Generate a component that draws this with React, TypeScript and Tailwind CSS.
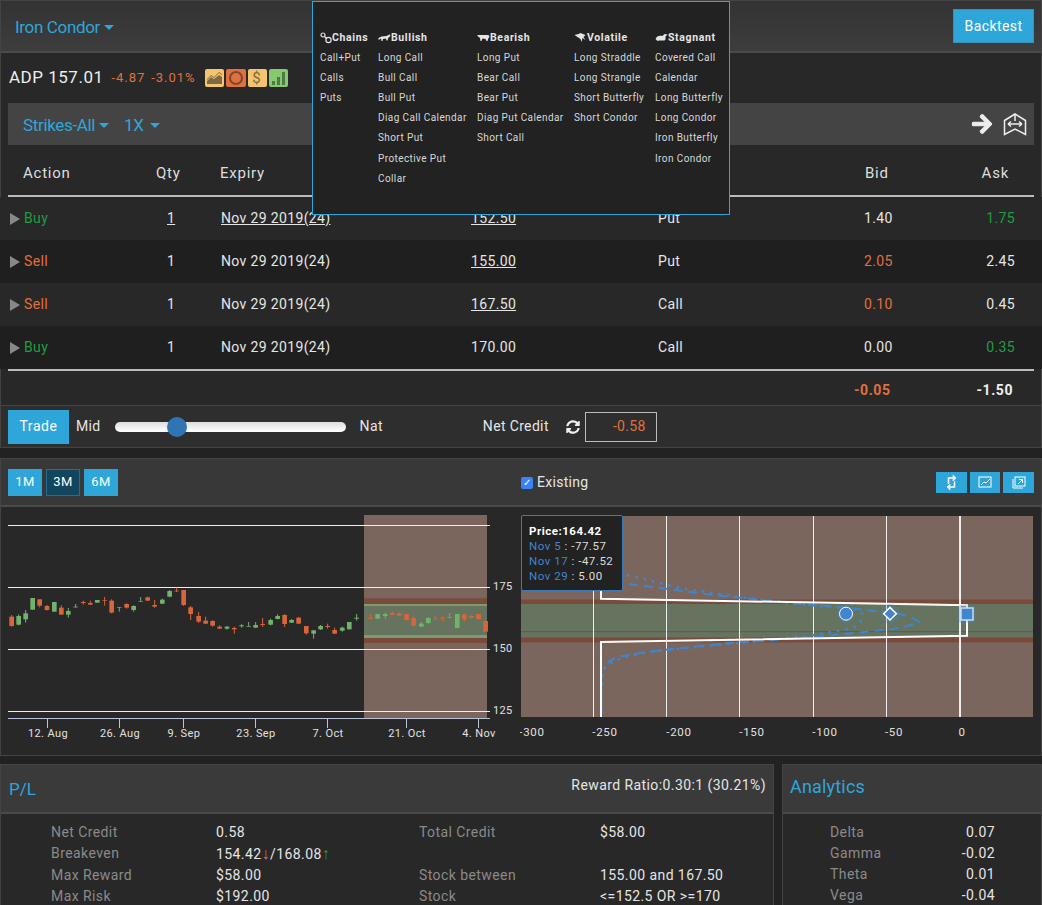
import { FaArrowRight, FaRetweet, FaSyncAlt } from 'react-icons/fa'

const candles: [number, number, number, number, number, 'r' | 'g'][] = [
  [35, 350, 378, 345, 380, 'r'], [56, 348, 374, 343, 376, 'g'], [77, 340, 358, 330, 368, 'g'],
  [98, 294, 329, 294, 329, 'g'], [119, 298, 317, 298, 322, 'r'], [141, 318, 330, 315, 332, 'r'],
  [163, 306, 335, 306, 335, 'g'], [184, 323, 344, 316, 344, 'r'], [205, 333, 344, 324, 353, 'g'],
  [227, 320, 322, 312, 323, 'g'], [250, 306, 309, 302, 314, 'r'], [271, 309, 314, 302, 315, 'r'],
  [292, 300, 308, 300, 308, 'g'], [314, 300, 302, 291, 317, 'r'], [335, 302, 338, 298, 340, 'r'],
  [358, 321, 323, 321, 335, 'g'], [380, 312, 323, 310, 326, 'r'], [401, 318, 330, 316, 335, 'g'],
  [422, 303, 305, 291, 305, 'g'], [443, 292, 302, 290, 303, 'r'], [464, 315, 320, 300, 323, 'r'],
  [487, 299, 311, 296, 312, 'g'], [509, 273, 290, 270, 292, 'g'], [530, 272, 274, 263, 276, 'r'],
  [551, 270, 315, 270, 318, 'r'], [572, 322, 342, 318, 360, 'r'], [596, 348, 365, 336, 369, 'r'],
  [617, 362, 371, 350, 372, 'r'], [638, 363, 377, 361, 380, 'r'], [659, 380, 386, 376, 387, 'r'],
  [681, 380, 386, 378, 389, 'g'], [703, 384, 388, 380, 401, 'r'], [725, 376, 379, 372, 383, 'g'],
  [746, 378, 380, 366, 380, 'g'], [767, 375, 383, 366, 384, 'g'], [788, 372, 375, 354, 381, 'r'],
  [812, 360, 374, 356, 376, 'g'], [833, 348, 357, 343, 358, 'g'], [854, 345, 372, 343, 381, 'r'],
  [875, 360, 368, 357, 369, 'g'], [896, 353, 371, 351, 372, 'r'], [919, 378, 400, 378, 404, 'r'],
  [941, 391, 401, 391, 416, 'g'], [962, 378, 388, 375, 390, 'g'], [983, 378, 381, 371, 386, 'r'],
  [1004, 390, 401, 383, 401, 'r'], [1027, 383, 392, 380, 395, 'g'], [1048, 366, 388, 366, 388, 'g'],
  [1070, 353, 356, 342, 362, 'g'], [1112, 353, 356, 343, 357, 'r'], [1133, 342, 356, 342, 356, 'g'],
  [1156, 342, 348, 338, 356, 'g'], [1177, 339, 344, 333, 345, 'r'], [1198, 340, 347, 338, 349, 'r'],
  [1220, 342, 360, 342, 361, 'r'], [1241, 354, 377, 349, 377, 'r'], [1264, 371, 380, 366, 381, 'g'],
  [1285, 354, 369, 351, 371, 'g'], [1306, 356, 358, 346, 360, 'r'], [1328, 353, 356, 349, 365, 'r'],
  [1349, 351, 353, 339, 353, 'g'], [1372, 342, 384, 342, 384, 'g'], [1393, 344, 358, 340, 365, 'r'],
  [1415, 348, 353, 345, 355, 'r'], [1436, 342, 358, 342, 358, 'r'], [1457, 363, 395, 363, 395, 'r'],
]

const menu = [
  { title: 'Chains', icon: 'chain', width: 'w-[58px]', items: ['Call+Put', 'Calls', 'Puts'] },
  { title: 'Bullish', icon: 'bull', width: 'w-[99px]', items: ['Long Call', 'Bull Call', 'Bull Put', 'Diag Call Calendar', 'Short Put', 'Protective Put', 'Collar'] },
  { title: 'Bearish', icon: 'bear', width: 'w-[97px]', items: ['Long Put', 'Bear Call', 'Bear Put', 'Diag Put Calendar', 'Short Call'] },
  { title: 'Volatile', icon: 'bird', width: 'w-[81px]', items: ['Long Straddle', 'Long Strangle', 'Short Butterfly', 'Short Condor'] },
  { title: 'Stagnant', icon: 'turtle', width: 'w-[72px]', items: ['Covered Call', 'Calendar', 'Long Butterfly', 'Long Condor', 'Iron Butterfly', 'Iron Condor'] },
]

const legs = [
  { action: 'Buy', qty: '1', qtyLine: true, strike: '152.50', strikeLine: true, type: 'Put', bid: '1.40', bidColor: 'text-[#e5e5e5]', ask: '1.75', askColor: 'text-[#1f9d45]', dateLine: true },
  { action: 'Sell', qty: '1', qtyLine: false, strike: '155.00', strikeLine: true, type: 'Put', bid: '2.05', bidColor: 'text-[#e0703f]', ask: '2.45', askColor: 'text-[#e5e5e5]', dateLine: false },
  { action: 'Sell', qty: '1', qtyLine: false, strike: '167.50', strikeLine: true, type: 'Call', bid: '0.10', bidColor: 'text-[#e0703f]', ask: '0.45', askColor: 'text-[#e5e5e5]', dateLine: false },
  { action: 'Buy', qty: '1', qtyLine: false, strike: '170.00', strikeLine: false, type: 'Call', bid: '0.00', bidColor: 'text-[#e5e5e5]', ask: '0.35', askColor: 'text-[#1f9d45]', dateLine: false },
]

function Caret() {
  return <span className="ml-[4px] inline-block border-x-[5.5px] border-t-[5.5px] border-x-transparent border-t-[#2ea6da] align-[3px]" />
}

function MenuIcon({ name }: { name: string }) {
  if (name === 'chain') {
    return (
      <svg width="12" height="12" viewBox="0 0 12 12" fill="none" stroke="#e5e5e5" strokeWidth="1.2" className="shrink-0">
        <circle cx="3" cy="3" r="2" />
        <circle cx="8.500" cy="8" r="2.600" />
        <path d="M4.500 4.500l2 2" />
      </svg>
    )
  }
  const paths: Record<string, string> = {
    bull: 'M0 5l3-1.500 5-.5 3-1.500 1 .5-1 2-1 .5-1 3H8l-.5-2-3 .5-.5 2H3L2.500 5.500 0 7z',
    bear: 'M0 2h11l1 2-1 1-1 3H9L8 6 5 5.500 4 8H3L2.500 5 0 3z',
    bird: 'M0 2l4-1 2-1 5 2-2 2 2 3-3-2-1 4-1-3-3-2z',
    turtle: 'M0 6c1-3 4-4 7-3l2-2 3 .5-2 2v3l-1 1H3.500L2 8z',
  }
  return (
    <svg width="13" height="10" viewBox="0 0 12 10" fill="#e5e5e5" className="shrink-0">
      <path d={paths[name]} />
    </svg>
  )
}

function Dropdown() {
  return (
    <div className="absolute top-px left-[312px] z-10 flex h-[214px] w-[418px] border border-[#2ea6da] bg-[#222] pt-[27px] pl-[7px] text-[10px] tracking-[0.04em] text-[#d8d8d8]">
      {menu.map((col) => (
        <div key={col.title} className={col.width}>
          <div className="flex h-[18px] items-center text-[10.5px] font-bold tracking-[0.06em] text-[#e5e5e5]">
            <MenuIcon name={col.icon} />
            {col.title}
          </div>
          {col.items.map((item) => (
            <div key={item} className="flex h-[20.2px] items-center whitespace-nowrap">
              {item}
            </div>
          ))}
        </div>
      ))}
    </div>
  )
}

function Gauges() {
  return (
    <div className="ml-[9px] flex gap-[2px]">
      <span className="flex h-[18px] w-[19px] items-center justify-center rounded-[2px] bg-[#f6c36f]">
        <svg width="15" height="13" viewBox="0 0 15 13" fill="#7d6a44">
          <path d="M0 7l4-4 3 2 5-5 3 2v1l-3-2-5 5-3-2-4 4z" />
          <path d="M0 12V9l4-4 3 2 5-4 3 2v7z" />
        </svg>
      </span>
      <span className="flex h-[18px] w-[20px] items-center justify-center rounded-[2px] bg-[#e0703f]">
        <span className="h-[14px] w-[14px] rounded-full border-2 border-[#7a4a30]" />
      </span>
      <span className="flex h-[18px] w-[19px] items-center justify-center rounded-[2px] bg-[#f6c36f] text-[15px] text-[#7d6a44]">$</span>
      <span className="flex h-[18px] w-[19px] items-end justify-center gap-[2px] rounded-[2px] bg-[#86c96e] pb-[2px]">
        <span className="h-[4px] w-[3px] bg-[#4f7a45]" />
        <span className="h-[8px] w-[3px] bg-[#4f7a45]" />
        <span className="h-[13px] w-[3px] bg-[#4f7a45]" />
      </span>
    </div>
  )
}

function TradePanel() {
  return (
    <section className="border border-[#444] bg-[#282828]">
      <div className="flex h-[52px] items-center justify-between border-b-2 border-[#4a4a4a] bg-gradient-to-b from-[#333] to-[#3d3d3d] pr-[7px] pl-[14px]">
        <span className="pt-[3px] text-[17px] tracking-[-0.02em] text-[#2ea6da]">
          Iron Condor
          <Caret />
        </span>
        <button className="h-[34px] w-[81px] border border-[#3a8fb5] bg-[#2ea6da] text-[14px] tracking-[0.03em] text-white">Backtest</button>
      </div>
      <div className="flex h-[50px] items-center pl-[8px] tracking-[0.06em]">
        <span className="text-[17px] tracking-[0.03em] text-[#eee]">ADP 157.01</span>
        <span className="ml-[8px] text-[13px] text-[#e0703f]">-4.87</span>
        <span className="ml-[6px] text-[13px] text-[#e0703f]">-3.01%</span>
        <Gauges />
      </div>
      <div className="mx-[7px] flex h-[42px] items-center justify-between bg-[#444] pr-[7px] pl-[15px]">
        <div className="pt-[3px] text-[17px] tracking-[-0.02em] text-[#2ea6da]">
          Strikes-All
          <Caret />
          <span className="ml-[15px]">1X</span>
          <span className="ml-[2px]"><Caret /></span>
        </div>
        <div className="flex items-center gap-[10px] text-[#eee]">
          <FaArrowRight className="h-[22px] w-[22px] stroke-current stroke-[25]" />
          <svg width="24" height="24" viewBox="0 0 24 24" fill="none" stroke="#eee" strokeWidth="1.5">
            <path d="M1.500 8.500L12 2l10.500 6.500v14L12 17 1.500 22.500z" />
            <path d="M12 2v7M5 12h14M5 12l3-2.500M5 12l3 2.500M19 12l-3-2.500M19 12l-3 2.500" />
          </svg>
        </div>
      </div>
      <div className="mx-[7px] grid h-[52px] grid-cols-[130px_63px_250px_188px_208px_118px_69px] items-center border-b-2 border-[#bbb] pt-[6px] text-[15px] tracking-[0.05em] text-[#ddd]">
        <span className="pl-[15px]">Action</span>
        <span className="pl-[18px]">Qty</span>
        <span className="pl-[19px]">Expiry</span>
        <span />
        <span />
        <span className="pl-[18px]">Bid</span>
        <span className="pr-[25px] text-right">Ask</span>
      </div>
      {legs.map((leg, i) => (
        <div
          key={leg.strike}
          className={`mx-[-1px] grid h-[43px] grid-cols-[138px_63px_250px_187px_209px_117px_77px] items-center text-[14px] tracking-[0.025em] text-[#e5e5e5] ${i % 2 === 0 ? 'bg-[#282828]' : 'bg-[#1f1f1f]'}`}
        >
          <span className={`flex items-center pl-[10px] ${leg.action === 'Buy' ? 'text-[#1f9d45]' : 'text-[#e0703f]'}`}>
            <span className="mr-[4px] inline-block border-y-[6px] border-l-[10px] border-y-transparent border-l-[#888]" />
            {leg.action}
          </span>
          <span className="pl-[29px]"><span className={leg.qtyLine ? 'underline' : ''}>{leg.qty}</span></span>
          <span className="pl-[20px]"><span className={leg.dateLine ? 'underline' : ''}>Nov 29 2019(24)</span></span>
          <span className="pl-[20px]"><span className={leg.strikeLine ? 'underline' : ''}>{leg.strike}</span></span>
          <span className="pl-[20px]">{leg.type}</span>
          <span className={`pl-[17px] ${leg.bidColor}`}>{leg.bid}</span>
          <span className={`pr-[26px] text-right ${leg.askColor}`}>{leg.ask}</span>
        </div>
      ))}
      <div className="mx-[7px] flex h-[36px] items-center justify-end border-t-2 border-[#bbb] pt-[4px] pr-[21px] text-[14px] font-bold tracking-[0.04em]">
        <span className="text-[#e0703f]">-0.05</span>
        <span className="ml-[86px] text-[#eee]">-1.50</span>
      </div>
    </section>
  )
}

function TradeBar() {
  return (
    <div className="flex h-[42px] items-center border border-t-0 border-[#444] bg-[#2e2e2e] pl-[7px] text-[14px] tracking-[0.025em] text-[#e5e5e5]">
      <button className="h-[34px] w-[61px] bg-[#2ea6da] tracking-[0.04em] text-white">Trade</button>
      <span className="ml-[7px]">Mid</span>
      <div className="relative ml-[14px] h-[10px] w-[231px] rounded-full bg-gradient-to-b from-[#ddd] to-white">
        <span className="absolute top-[-5px] left-[52px] h-[20px] w-[20px] rounded-full bg-[#2f74b5]" />
      </div>
      <span className="ml-[14px]">Nat</span>
      <span className="ml-[100px]">Net Credit</span>
      <FaSyncAlt className="ml-[17px] h-[14px] w-[14px] text-[#eee]" />
      <div className="ml-[5px] flex h-[30px] w-[72px] items-center justify-end border border-[#bbb] pr-[10px] text-[#e0703f]">-0.58</div>
    </div>
  )
}

function CandleChart() {
  return (
    <svg width="519" height="248" viewBox="1 507 519 248" className="block shrink-0" fontFamily="Roboto, sans-serif">
      <rect x="364" y="515" width="123" height="203" fill="#7a665c" />
      <rect x="364" y="598.300" width="123" height="6" fill="#7a4a3c" />
      <rect x="364" y="604" width="123" height="2" fill="#7f9a70" />
      <rect x="364" y="606" width="123" height="29" fill="#66735f" />
      <rect x="364" y="635" width="123" height="3" fill="#7f9a70" />
      <rect x="364" y="638" width="123" height="5" fill="#7a4a3c" />
      {[525.5, 587.5, 649.5, 711.5].map((y) => (
        <line key={y} x1="8" x2="490" y1={y} y2={y} stroke="#eee" strokeWidth="1" />
      ))}
      <line x1="8" x2="490" y1="718.500" y2="718.500" stroke="#b8c4dc" strokeWidth="1" />
      {[47.5, 119.5, 183.5, 255.5, 327.5, 406.5, 478.5].map((x) => (
        <line key={x} x1={x} x2={x} y1="718" y2="728" stroke="#b8c4dc" strokeWidth="1" />
      ))}
      <g transform="translate(0 500) scale(0.3333)">
        {candles.map(([x, top, bottom, high, low, color]) => (
          <g key={x} fill={color === 'r' ? '#d9653a' : '#71b36b'} stroke={color === 'r' ? '#d9653a' : '#71b36b'}>
            <line x1={x} x2={x} y1={high} y2={low} strokeWidth="3" />
            <rect x={x - 7} y={top} width="14" height={bottom - top} strokeWidth="0" />
          </g>
        ))}
      </g>
      <g fill="#e0e0e0" fontSize="11" letterSpacing="0.3">
        <text x="493" y="590">175</text>
        <text x="493" y="652">150</text>
        <text x="493" y="714">125</text>
      </g>
      <g fill="#e0e0e0" fontSize="11" letterSpacing="0.4" textAnchor="middle">
        <text x="48" y="737">12. Aug</text>
        <text x="120" y="737">26. Aug</text>
        <text x="184" y="737">9. Sep</text>
        <text x="256" y="737">23. Sep</text>
        <text x="328" y="737">7. Oct</text>
        <text x="407" y="737">21. Oct</text>
        <text x="479" y="737">4. Nov</text>
      </g>
    </svg>
  )
}

function PayoffChart() {
  return (
    <div className="relative shrink-0">
      <svg width="521" height="248" viewBox="520 507 521 248" className="block" fontFamily="Roboto, sans-serif">
        <rect x="521" y="516" width="512" height="201" fill="#7a665c" />
        <rect x="521" y="599.500" width="512" height="5" fill="#7a4a3c" />
        <rect x="521" y="604" width="512" height="33.500" fill="#66735f" />
        <rect x="521" y="637.500" width="512" height="5" fill="#7a4a3c" />
        <line x1="521" x2="1033" y1="631.700" y2="631.700" stroke="#4f5f4f" />
        {[593.5, 666.5, 739.5, 813.5, 886.5].map((x) => (
          <line key={x} x1={x} x2={x} y1="516" y2="717" stroke="#eee" strokeWidth="1" />
        ))}
        <line x1="960" x2="960" y1="516" y2="717" stroke="#eee" strokeWidth="2" />
        <path
          d="M627 575L680 588L747 598L815 606L849 608Q865 612 863 617Q860 625 853 628L815 635L747 642L666 650Q640 653 622 658Q608 663 603 670Q601 690 601.500 717"
          fill="none" stroke="#3f86cf" strokeWidth="2.500" strokeDasharray="2.500 6"
        />
        <path
          d="M629 584L714 595L781 602L849 608L900 614Q915 618 919 622Q905 628 883 630L815 637L731 643L663 650Q635 653 619 657Q612 659 607 663"
          fill="none" stroke="#3f86cf" strokeWidth="2" strokeDasharray="9 6"
        />
        <path d="M601 590V598.700L967 605.300V635.700L601 642V717" fill="none" stroke="#fff" strokeWidth="2" />
        <circle cx="846" cy="613.700" r="9.500" fill="#3f86cf" opacity="0.25" />
        <circle cx="846" cy="613.700" r="6.500" fill="#3f86cf" stroke="#fff" strokeWidth="1" />
        <circle cx="890" cy="613.700" r="10" fill="#3f86cf" opacity="0.25" />
        <rect x="885.500" y="609.200" width="9" height="9" fill="#3f86cf" stroke="#fff" strokeWidth="1.500" transform="rotate(45 890 613.700)" />
        <rect x="958" y="605" width="18" height="18" rx="3" fill="#3f86cf" opacity="0.25" />
        <rect x="961" y="608" width="12" height="12" fill="#3f86cf" stroke="#cde" strokeWidth="1.500" />
        <g fill="#e0e0e0" fontSize="11.500" letterSpacing="0.7" textAnchor="middle">
          <text x="532" y="736">-300</text>
          <text x="605" y="736">-250</text>
          <text x="679" y="736">-200</text>
          <text x="752" y="736">-150</text>
          <text x="825" y="736">-100</text>
          <text x="894" y="736">-50</text>
          <text x="962" y="736">0</text>
        </g>
      </svg>
      <div className="absolute top-[8px] left-[1px] h-[76px] w-[102px] rounded-[2px] border border-[#3a7ab8] bg-[#222] pt-[8px] pl-[7px] text-[11.500px] leading-[15px] tracking-[0.045em] text-[#ddd]">
        <div className="font-bold text-white">Price:164.42</div>
        <div><span className="text-[#3f86cf]">Nov 5</span> : -77.57</div>
        <div><span className="text-[#3f86cf]">Nov 17</span> : -47.52</div>
        <div><span className="text-[#3f86cf]">Nov 29</span> : 5.00</div>
      </div>
    </div>
  )
}

function ChartPanel() {
  return (
    <section className="mt-[10px] border border-[#444] bg-[#282828]">
      <div className="flex h-[48px] items-center border-b-2 border-[#4a4a4a] bg-[#383838] pr-[7px] pl-[7px]">
        <div className="flex w-[513px] gap-[4px] text-[13px] tracking-[0.03em] text-white">
          <span className="flex h-[27px] w-[34px] items-center justify-center bg-[#2ea6da]">1M</span>
          <span className="flex h-[27px] w-[34px] items-center justify-center border border-[#1f6f93] bg-[#12465f]">3M</span>
          <span className="flex h-[27px] w-[34px] items-center justify-center bg-[#2ea6da]">6M</span>
        </div>
        <label className="mt-[1px] flex items-center gap-[4px] text-[14px] tracking-[0.02em] text-[#e5e5e5]">
          <span className="flex h-[12px] w-[12px] items-center justify-center rounded-[2px] bg-[#3b82f6] text-[10px] text-white">✓</span>
          Existing
        </label>
        <div className="ml-auto flex gap-[3px] text-white">
          <span className="flex h-[21px] w-[31px] items-center justify-center bg-[#2ea6da]"><FaRetweet className="h-[15px] w-[15px] rotate-90" /></span>
          <span className="flex h-[21px] w-[30px] items-center justify-center bg-[#2ea6da]">
            <svg width="14" height="12" viewBox="0 0 14 12" fill="none" stroke="#fff" strokeWidth="1">
              <rect x="1" y="1" width="12" height="10" />
              <path d="M3 9l3-3 2 1 4-4" />
            </svg>
          </span>
          <span className="flex h-[21px] w-[31px] items-center justify-center bg-[#2ea6da]">
            <svg width="14" height="13" viewBox="0 0 14 13" fill="none" stroke="#fff" strokeWidth="1">
              <rect x="3" y="1" width="10" height="9" />
              <path d="M1 3v9h10M6 8l4-4M7 3.500h3.500V7" />
            </svg>
          </span>
        </div>
      </div>
      <div className="flex h-[248px]">
        <CandleChart />
        <PayoffChart />
      </div>
    </section>
  )
}

function Stat({ label, value, alignRight }: { label: string; value: React.ReactNode; alignRight?: boolean }) {
  return (
    <>
      <span className="text-[#8a8a8a]">{label}</span>
      <span className={alignRight ? 'text-right text-[#e5e5e5]' : 'text-[#e5e5e5]'}>{value}</span>
    </>
  )
}

function BottomPanels() {
  return (
    <div className="mt-[8px] flex justify-between">
      <section className="w-[774px] border border-[#444] bg-[#282828]">
        <div className="flex h-[49px] justify-between border-b-2 border-[#4a4a4a] bg-[#3a3a3a] pr-[7px] pl-[8px]">
          <span className="mt-[12px] text-[17px] text-[#2ea6da]">P/L</span>
          <span className="mt-[10px] text-[14px] tracking-[0.03em] text-[#e5e5e5]">Reward Ratio:0.30:1 (30.21%)</span>
        </div>
        <div className="grid grid-cols-[165px_203px_181px_auto] pt-[8px] pl-[50px] text-[14px] leading-[21px] tracking-[0.03em]">
          <Stat label="Net Credit" value="0.58" />
          <Stat label="Total Credit" value="$58.00" />
          <Stat
            label="Breakeven"
            value={<>154.42<span className="text-[16px] font-bold text-[#e0703f]">↓</span>/168.08<span className="text-[16px] font-bold text-[#1f9d45]">↑</span></>}
          />
          <Stat label="" value="" />
          <Stat label="Max Reward" value="$58.00" />
          <Stat label="Stock between" value="155.00 and 167.50" />
          <Stat label="Max Risk" value="$192.00" />
          <Stat label="Stock" value="<=152.5 OR >=170" />
        </div>
      </section>
      <section className="w-[260px] border border-[#444] bg-[#282828]">
        <div className="flex h-[49px] items-center border-b-2 border-[#4a4a4a] bg-[#3a3a3a] pb-[4px] pl-[7px] text-[18px] tracking-[0.01em] text-[#2ea6da]">Analytics</div>
        <div className="grid grid-cols-[125px_40px] pt-[8px] pl-[47px] text-[14px] leading-[21px] tracking-[0.03em]">
          <Stat label="Delta" value="0.07" alignRight />
          <Stat label="Gamma" value="-0.02" alignRight />
          <Stat label="Theta" value="0.01" alignRight />
          <Stat label="Vega" value="-0.04" alignRight />
        </div>
      </section>
    </div>
  )
}

export default function App() {
  return (
    <div className="relative h-[905px] w-[1042px] overflow-hidden bg-[#222] font-['Roboto',sans-serif]">
      <Dropdown />
      <TradePanel />
      <TradeBar />
      <ChartPanel />
      <BottomPanels />
    </div>
  )
}
